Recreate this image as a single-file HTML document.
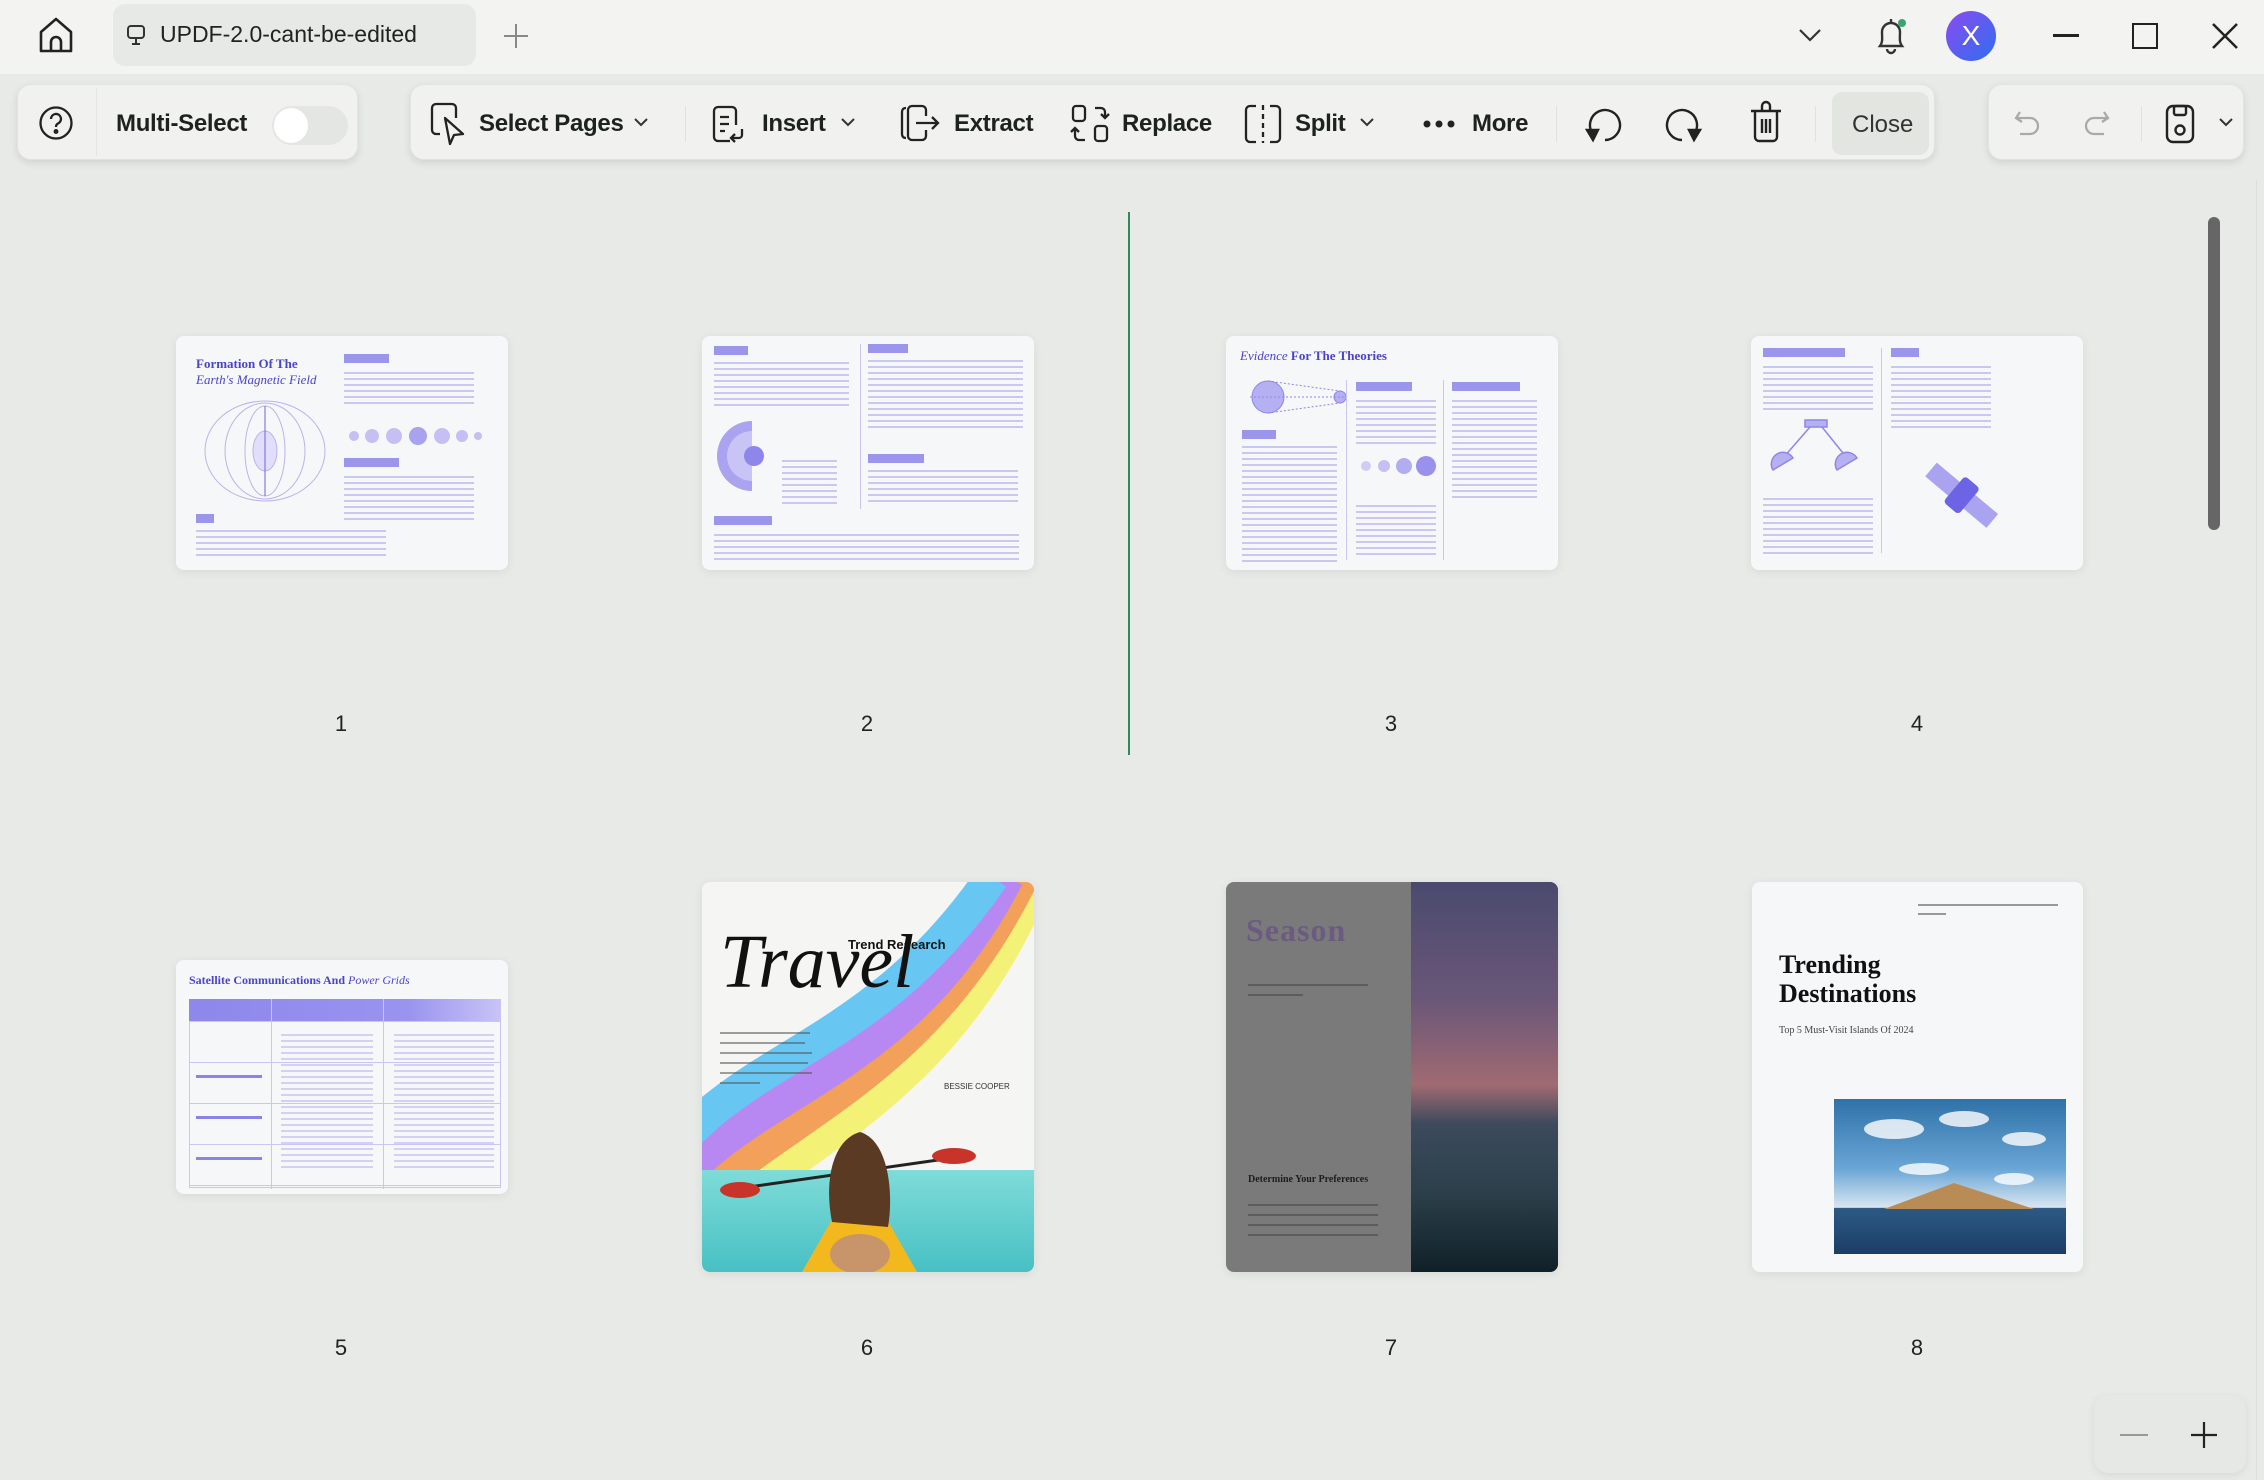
<!DOCTYPE html>
<html><head><meta charset="utf-8">
<style>
*{margin:0;padding:0;box-sizing:border-box}
body{width:2264px;height:1480px;overflow:hidden;background:#e8eae8;font-family:"Liberation Sans",sans-serif;position:relative;color:#1b1f1c}
.abs{position:absolute}
.title{left:0;top:0;width:2264px;height:74px;background:#f3f4f2}
.panel{position:absolute;background:#f1f2f0;border:1px solid #e2e4e1;border-radius:14px;box-shadow:0 3px 8px rgba(0,0,0,.10)}
.tb{position:absolute;top:124px;transform:translateY(-50%);font-size:24px;font-weight:bold;color:#1d221f;white-space:nowrap;letter-spacing:-0.3px}
svg.ic{position:absolute;overflow:visible}
.page{position:absolute;background:#f6f7f8;border-radius:8px;box-shadow:0 2px 10px rgba(0,0,0,.07);overflow:hidden}
.lbl{position:absolute;font-size:22px;color:#222;transform:translateX(-50%)}
.lines{position:absolute;background:repeating-linear-gradient(#f6f7f8 0 4px,#c9c8f0 4px 6px)}
.tag{position:absolute;height:9px;background:#9b95ec}
.ser{font-family:"Liberation Serif",serif}
</style></head><body>

<div class="abs title"></div>
<svg class="ic" style="left:38px;top:16px" width="36" height="38" viewBox="0 0 36 38" fill="none" stroke="#222" stroke-width="2.6" stroke-linejoin="round"><path d="M3 16 L18 3 L33 16 V35 H3 Z"/><path d="M13 35 V26 a5 5 0 0 1 10 0 V35"/></svg>
<div class="abs" style="left:113px;top:4px;width:363px;height:62px;background:#e7e9e6;border-radius:12px"></div>
<svg class="ic" style="left:126px;top:24px" width="20" height="22" viewBox="0 0 20 22" fill="none" stroke="#333" stroke-width="2"><rect x="2" y="2" width="16" height="12" rx="3"/><path d="M10 14v5M6 20h8"/></svg>
<div class="abs" style="left:160px;top:21px;font-size:23px;color:#222">UPDF-2.0-cant-be-edited</div>
<svg class="ic" style="left:503px;top:23px" width="26" height="26" stroke="#888" stroke-width="2"><path d="M13 1v24M1 13h24"/></svg>
<svg class="ic" style="left:1799px;top:28px" width="22" height="14" fill="none" stroke="#333" stroke-width="2.2"><path d="M1 2l10 10 10-10"/></svg>
<svg class="ic" style="left:1876px;top:16px" width="30" height="40" fill="none" stroke="#333" stroke-width="2.4"><path d="M4 30 C7 26 6 22 6 16 a9 9 0 0 1 18 0 c0 6 -1 10 2 14 Z M15 3v4 M11 33a4 4 0 0 0 8 0"/><circle cx="26" cy="7" r="4" fill="#3aa56a" stroke="none"/></svg>
<div class="abs" style="left:1946px;top:11px;width:50px;height:50px;border-radius:50%;background:linear-gradient(135deg,#8a4cf0,#2f6df0);color:#fff;font-size:28px;text-align:center;line-height:50px">X</div>
<div class="abs" style="left:2053px;top:34px;width:26px;height:2.5px;background:#222"></div>
<div class="abs" style="left:2132px;top:23px;width:26px;height:26px;border:2.5px solid #222"></div>
<svg class="ic" style="left:2212px;top:23px" width="26" height="26" stroke="#222" stroke-width="2.5"><path d="M1 1l24 24M25 1L1 25"/></svg>

<div class="panel" style="left:17px;top:84px;width:341px;height:76px"></div>
<div class="abs" style="left:96px;top:88px;width:1px;height:68px;background:#e4e6e3"></div>
<svg class="ic" style="left:39px;top:106px" width="34" height="34" fill="none" stroke="#222" stroke-width="2.3"><circle cx="17" cy="17" r="15.5"/><path d="M12 13a5 5 0 1 1 7 4.5c-1.5.8-2 1.8-2 3.5"/><circle cx="17" cy="25.5" r="1.3" fill="#222"/></svg>
<div class="tb" style="left:116px">Multi-Select</div>
<div class="abs" style="left:272px;top:106px;width:76px;height:39px;border-radius:20px;background:#e4e6e3"></div>
<div class="abs" style="left:274px;top:108px;width:34px;height:35px;border-radius:50%;background:#fff"></div>

<div class="panel" style="left:410px;top:84px;width:1525px;height:76px"></div>
<svg class="ic" style="left:430px;top:102px" width="36" height="44" fill="none" stroke="#222" stroke-width="2.3" stroke-linejoin="round"><path d="M10 32H6a4 4 0 0 1-4-4V6a4 4 0 0 1 4-4h16a4 4 0 0 1 4 4v10"/><path d="M15 16 L20 42 L24 33 L33 32 Z" fill="#f1f2f0"/></svg>
<div class="tb" style="left:479px">Select Pages</div>
<svg class="ic" style="left:634px;top:118px" width="14" height="9" fill="none" stroke="#333" stroke-width="2"><path d="M1 1l6 6 6-6"/></svg>
<div class="abs" style="left:685px;top:106px;width:1px;height:36px;background:#e0e2df"></div>
<svg class="ic" style="left:712px;top:105px" width="36" height="38" fill="none" stroke="#222" stroke-width="2.3"><path d="M18 36H6a4 4 0 0 1-4-4V6a4 4 0 0 1 4-4h14a4 4 0 0 1 4 4v14"/><path d="M8 12h9M8 19h9M8 26h5M30 24v6a3 3 0 0 1-3 3h-7M23 29l-4 4 4 4"/></svg>
<div class="tb" style="left:762px">Insert</div>
<svg class="ic" style="left:841px;top:118px" width="14" height="9" fill="none" stroke="#333" stroke-width="2"><path d="M1 1l6 6 6-6"/></svg>
<svg class="ic" style="left:900px;top:104px" width="48" height="38" fill="none" stroke="#222" stroke-width="2.3"><path d="M6 4C3 4 2 6 2 8v22c0 2 1 4 4 4"/><path d="M26 12V6a4 4 0 0 0-4-4H12a4 4 0 0 0-4 4v26a4 4 0 0 0 4 4h10a4 4 0 0 0 4-4v-6"/><path d="M16 19h22M32 13l6 6-6 6"/></svg>
<div class="tb" style="left:954px">Extract</div>
<svg class="ic" style="left:1071px;top:104px" width="38" height="40" fill="none" stroke="#222" stroke-width="2.3"><rect x="2" y="2" width="12" height="15" rx="3"/><rect x="24" y="22" width="12" height="15" rx="3"/><path d="M24 4h6a4 4 0 0 1 4 4v6M30 10l4 4 4-4"/><path d="M14 36H8a4 4 0 0 1-4-4v-6M0 28l4-4 4 4"/></svg>
<div class="tb" style="left:1122px">Replace</div>
<svg class="ic" style="left:1244px;top:104px" width="38" height="40" fill="none" stroke="#222" stroke-width="2.3"><path d="M12 2H6a4 4 0 0 0-4 4v28a4 4 0 0 0 4 4h6M26 2h6a4 4 0 0 1 4 4v28a4 4 0 0 1-4 4h-6"/><path d="M19 1v38" stroke-dasharray="5 4"/></svg>
<div class="tb" style="left:1295px">Split</div>
<svg class="ic" style="left:1360px;top:118px" width="14" height="9" fill="none" stroke="#333" stroke-width="2"><path d="M1 1l6 6 6-6"/></svg>
<svg class="ic" style="left:1423px;top:120px" width="34" height="8" fill="#222"><circle cx="4" cy="4" r="3.5"/><circle cx="16" cy="4" r="3.5"/><circle cx="28" cy="4" r="3.5"/></svg>
<div class="tb" style="left:1472px">More</div>
<div class="abs" style="left:1556px;top:106px;width:1px;height:36px;background:#e0e2df"></div>
<svg class="ic" style="left:1583px;top:104px" width="40" height="40" fill="none" stroke="#222" stroke-width="2.4"><path d="M10 30 A15 15 0 1 1 22 36"/><path d="M4 26 L10 36 L15 26 Z" fill="#222"/></svg>
<svg class="ic" style="left:1664px;top:104px" width="40" height="40" fill="none" stroke="#222" stroke-width="2.4"><path d="M30 30 A15 15 0 1 0 18 36"/><path d="M36 26 L30 36 L25 26 Z" fill="#222"/></svg>
<svg class="ic" style="left:1750px;top:100px" width="32" height="42" fill="none" stroke="#222" stroke-width="2.4"><path d="M1 11h30M12 11V6a4 4 0 0 1 8 0v5M5 11v26a4 4 0 0 0 4 4h14a4 4 0 0 0 4-4V11M12 19v14M16 19v14M20 19v14"/></svg>
<div class="abs" style="left:1815px;top:106px;width:1px;height:36px;background:#e0e2df"></div>
<div class="abs" style="left:1832px;top:92px;width:97px;height:63px;border-radius:10px;background:#e3e5e1"></div>
<div class="abs" style="left:1852px;top:111px;font-size:24px;color:#333">Close</div>

<div class="panel" style="left:1988px;top:84px;width:256px;height:76px"></div>
<svg class="ic" style="left:2014px;top:110px" width="26" height="28" fill="none" stroke="#aaa" stroke-width="2.3"><path d="M6 2L2 8l6 4M2 8h14a8 8 0 0 1 0 16H6"/></svg>
<svg class="ic" style="left:2084px;top:110px" width="26" height="28" fill="none" stroke="#aaa" stroke-width="2.3"><path d="M20 2l4 6-6 4M24 8H10a8 8 0 0 0 0 16h10"/></svg>
<div class="abs" style="left:2141px;top:106px;width:1px;height:36px;background:#e0e2df"></div>
<svg class="ic" style="left:2165px;top:104px" width="30" height="40" fill="none" stroke="#222" stroke-width="2.4"><rect x="2" y="2" width="26" height="36" rx="6"/><rect x="9" y="2" width="12" height="9" rx="2"/><circle cx="15" cy="26" r="4.5"/></svg>
<svg class="ic" style="left:2219px;top:118px" width="14" height="9" fill="none" stroke="#333" stroke-width="2"><path d="M1 1l6 6 6-6"/></svg>

<div class="abs" style="left:1128px;top:212px;width:2px;height:543px;background:#2e8b57"></div>
<div class="abs" style="left:2208px;top:217px;width:12px;height:313px;border-radius:6px;background:#666"></div>
<div class="abs" style="left:2256px;top:180px;width:1px;height:1300px;background:#ddd"></div>

<!-- Page 1 -->
<div class="page" style="left:176px;top:336px;width:332px;height:234px">
 <div class="abs ser" style="left:20px;top:20px;font-size:13px;color:#4a44c8;font-weight:bold;line-height:16px">Formation Of The<br><i style="font-weight:normal">Earth's Magnetic Field</i></div>
 <div class="tag" style="left:168px;top:18px;width:45px"></div>
 <div class="lines" style="left:168px;top:32px;width:130px;height:40px"></div>
 <svg class="abs" style="left:14px;top:60px" width="150" height="110" fill="none" stroke="#b8b4ee" stroke-width="1"><ellipse cx="75" cy="55" rx="20" ry="45"/><ellipse cx="75" cy="55" rx="40" ry="48"/><ellipse cx="75" cy="55" rx="60" ry="50"/><ellipse cx="75" cy="55" rx="12" ry="20" fill="#e0defa"/><path d="M75 10 L75 100" stroke="#6d66e0"/></svg>
 <svg class="abs" style="left:168px;top:80px" width="140" height="40"><g fill="#c4c0f3"><circle cx="10" cy="20" r="5"/><circle cx="28" cy="20" r="7"/><circle cx="50" cy="20" r="8"/><circle cx="74" cy="20" r="9" fill="#a8a2ef"/><circle cx="98" cy="20" r="8"/><circle cx="118" cy="20" r="6"/><circle cx="134" cy="20" r="4"/></g></svg>
 <div class="tag" style="left:168px;top:122px;width:55px"></div>
 <div class="lines" style="left:168px;top:136px;width:130px;height:48px"></div>
 <div class="tag" style="left:20px;top:178px;width:18px"></div>
 <div class="lines" style="left:20px;top:190px;width:190px;height:32px"></div>
</div>
<!-- Page 2 -->
<div class="page" style="left:702px;top:336px;width:332px;height:234px">
 <div class="tag" style="left:12px;top:10px;width:34px"></div>
 <div class="lines" style="left:12px;top:22px;width:135px;height:52px"></div>
 <svg class="abs" style="left:10px;top:80px" width="80" height="80"><path d="M40 5 A 35 35 0 1 0 40 75 Z" fill="#a9a3f0"/><path d="M40 15 A 25 25 0 1 0 40 65 Z" fill="#c8c4f6"/><circle cx="42" cy="40" r="10" fill="#8e86ea"/></svg>
 <div class="lines" style="left:80px;top:120px;width:55px;height:50px"></div>
 <div class="abs" style="left:158px;top:8px;width:1px;height:165px;background:#c9c6f2"></div>
 <div class="tag" style="left:166px;top:8px;width:40px"></div>
 <div class="lines" style="left:166px;top:20px;width:155px;height:74px"></div>
 <div class="tag" style="left:166px;top:118px;width:56px"></div>
 <div class="lines" style="left:166px;top:130px;width:150px;height:40px"></div>
 <div class="tag" style="left:12px;top:180px;width:58px"></div>
 <div class="lines" style="left:12px;top:194px;width:305px;height:30px"></div>
</div>
<!-- Page 3 -->
<div class="page" style="left:1226px;top:336px;width:332px;height:234px">
 <div class="abs ser" style="left:14px;top:12px;font-size:13px;color:#4a44c8;font-weight:bold"><i style="font-weight:normal">Evidence</i> For The Theories</div>
 <svg class="abs" style="left:14px;top:36px" width="110" height="50" fill="none" stroke="#8e86ea"><circle cx="28" cy="25" r="16" fill="#b5b0f2"/><circle cx="100" cy="25" r="6" fill="#b5b0f2"/><path d="M28 9 L100 19 M28 41 L100 31 M10 25h96" stroke-dasharray="2 2"/></svg>
 <div class="tag" style="left:16px;top:94px;width:34px"></div>
 <div class="lines" style="left:16px;top:106px;width:95px;height:120px"></div>
 <div class="abs" style="left:120px;top:44px;width:1px;height:180px;background:#c9c6f2"></div>
 <div class="tag" style="left:130px;top:46px;width:56px"></div>
 <div class="lines" style="left:130px;top:60px;width:80px;height:50px"></div>
 <svg class="abs" style="left:128px;top:115px" width="86" height="30"><circle cx="12" cy="15" r="5" fill="#d0ccf6"/><circle cx="30" cy="15" r="6" fill="#c4c0f3"/><circle cx="50" cy="15" r="8" fill="#b2acf1"/><circle cx="72" cy="15" r="10" fill="#9991ec"/></svg>
 <div class="lines" style="left:130px;top:165px;width:80px;height:56px"></div>
 <div class="abs" style="left:217px;top:44px;width:1px;height:180px;background:#c9c6f2"></div>
 <div class="tag" style="left:226px;top:46px;width:68px"></div>
 <div class="lines" style="left:226px;top:60px;width:85px;height:104px"></div>
</div>
<!-- Page 4 -->
<div class="page" style="left:1751px;top:336px;width:332px;height:234px">
 <div class="tag" style="left:12px;top:12px;width:82px"></div>
 <div class="lines" style="left:12px;top:26px;width:110px;height:50px"></div>
 <svg class="abs" style="left:14px;top:82px" width="100" height="70" fill="none" stroke="#8e86ea" stroke-width="1.5"><rect x="40" y="2" width="22" height="7" fill="#b5b0f2"/><path d="M45 9 L18 40 M57 9 L82 40"/><path d="M8 52 a10 10 0 0 1 20 -12 z M72 52 a10 10 0 0 1 20 -12 z" fill="#b5b0f2"/></svg>
 <div class="lines" style="left:12px;top:158px;width:110px;height:60px"></div>
 <div class="abs" style="left:130px;top:12px;width:1px;height:205px;background:#c9c6f2"></div>
 <div class="tag" style="left:140px;top:12px;width:28px"></div>
 <div class="lines" style="left:140px;top:26px;width:100px;height:70px"></div>
 <svg class="abs" style="left:165px;top:120px" width="90" height="80"><g transform="rotate(40 45 40)"><rect x="5" y="30" width="80" height="18" fill="#aaa4f0"/><rect x="35" y="22" width="20" height="34" rx="4" fill="#6c64e4"/></g></svg>
</div>
<!-- Page 5 -->
<div class="page" style="left:176px;top:960px;width:332px;height:234px">
 <div class="abs ser" style="left:13px;top:13px;font-size:12px;color:#4a44c8;font-weight:bold">Satellite Communications And <i style="font-weight:normal">Power Grids</i></div>
 <div class="abs" style="left:13px;top:39px;width:312px;height:22px;background:linear-gradient(90deg,#8e87ec,#9a93ef 70%,#c8c4f6)"></div>
 <div class="abs" style="left:13px;top:61px;width:312px;height:167px;border:1px solid #c9c6f2;background:repeating-linear-gradient(#f6f7f8 0 40px,#c9c6f2 40px 41px)"></div>
 <div class="abs" style="left:95px;top:39px;width:1px;height:190px;background:#c9c6f2"></div>
 <div class="abs" style="left:207px;top:39px;width:1px;height:190px;background:#c9c6f2"></div>
 <div class="lines" style="left:105px;top:70px;width:92px;height:140px;background:repeating-linear-gradient(transparent 0 4px,#d3d0f4 4px 6px)"></div>
 <div class="lines" style="left:218px;top:70px;width:100px;height:140px;background:repeating-linear-gradient(transparent 0 4px,#d3d0f4 4px 6px)"></div>
 <div class="lines" style="left:20px;top:77px;width:66px;height:130px;background:repeating-linear-gradient(transparent 0 38px,#8a84e6 38px 41px)"></div>
</div>
<!-- Page 6 -->
<div class="page" style="left:702px;top:882px;width:332px;height:390px;background:#f5f5f4">
 <svg class="abs" style="left:0;top:0" width="332" height="390" viewBox="0 0 332 390">
  <g fill="none" stroke-width="34">
   <path d="M-40 400 C 40 270, 230 250, 335 -5" stroke="#f3f277"/>
   <path d="M-40 360 C 40 240, 210 220, 320 -5" stroke="#f2a05a"/>
   <path d="M-40 320 C 40 205, 200 200, 305 -5" stroke="#b888f2"/>
   <path d="M-40 282 C 40 170, 170 170, 290 -5" stroke="#68c6f2"/>
  </g>
  <text x="18" y="105" font-family="Liberation Serif,serif" font-style="italic" font-size="76" fill="#111">Travel</text>
  <text x="146" y="67" font-family="Liberation Sans,sans-serif" font-weight="bold" font-size="13" fill="#111">Trend Research</text>
  <text x="242" y="207" font-family="Liberation Sans,sans-serif" font-size="8" fill="#333">BESSIE COOPER</text>
  <g fill="#555" opacity=".55"><rect x="18" y="150" width="90" height="2"/><rect x="18" y="160" width="85" height="2"/><rect x="18" y="170" width="92" height="2"/><rect x="18" y="180" width="88" height="2"/><rect x="18" y="190" width="92" height="2"/><rect x="18" y="200" width="40" height="2"/></g>
  <defs><linearGradient id="sea" x1="0" y1="0" x2="0" y2="1"><stop offset="0" stop-color="#7fdcd8"/><stop offset="1" stop-color="#48c0c4"/></linearGradient></defs>
  <rect x="0" y="288" width="332" height="102" fill="url(#sea)"/>
  <path d="M40 306 L250 276" stroke="#222" stroke-width="3"/>
  <ellipse cx="38" cy="308" rx="20" ry="8" fill="#c8342a"/>
  <ellipse cx="252" cy="274" rx="22" ry="8" fill="#c8342a"/>
  <path d="M100 390 L140 320 L175 320 L215 390 Z" fill="#f3b81e"/>
  <path d="M130 340 C 122 300 130 258 158 250 C 186 258 192 310 186 345 Z" fill="#5a3a22"/>
  <ellipse cx="158" cy="372" rx="30" ry="20" fill="#c8946a"/>
 </svg>
</div>
<!-- Page 7 -->
<div class="page" style="left:1226px;top:882px;width:332px;height:390px;background:#7a7a7a">
 <div class="abs" style="left:185px;top:0;width:147px;height:390px;background:linear-gradient(#4a4a6e 0%,#6a5778 30%,#a06a72 52%,#3d4a5c 62%,#2b3f4a 80%,#102028 100%)"></div>
 <div class="abs ser" style="left:20px;top:30px;font-size:32px;font-weight:bold;color:#6b5b80;letter-spacing:1px">Season</div>
 <div class="abs" style="left:22px;top:102px;width:120px;height:2px;background:#5c5c5c"></div>
 <div class="abs" style="left:22px;top:112px;width:55px;height:2px;background:#5c5c5c"></div>
 <div class="abs ser" style="left:22px;top:292px;font-size:10px;font-weight:bold;color:#1e1e1e">Determine Your Preferences</div>
 <div class="lines" style="left:22px;top:314px;width:130px;height:48px;background:repeating-linear-gradient(transparent 0 8px,#5c5c5c 8px 10px)"></div>
</div>
<!-- Page 8 -->
<div class="page" style="left:1752px;top:882px;width:331px;height:390px">
 <div class="abs" style="left:166px;top:22px;width:140px;height:2px;background:#999"></div>
 <div class="abs" style="left:166px;top:31px;width:28px;height:2px;background:#999"></div>
 <div class="abs ser" style="left:27px;top:68px;font-size:26px;font-weight:bold;color:#111;line-height:29px">Trending<br>Destinations</div>
 <div class="abs ser" style="left:27px;top:143px;font-size:10px;color:#444">Top 5 Must-Visit Islands Of 2024</div>
 <div class="abs" style="left:82px;top:217px;width:232px;height:155px;background:linear-gradient(#2f72a8 0%,#6aa6d6 45%,#d8e6f0 70%,#2c5a84 70.5%,#1c3e66 100%)"></div>
 <svg class="abs" style="left:82px;top:217px" width="232" height="155"><path d="M50 110 L120 84 L200 110 Z" fill="#b98c55"/><g fill="#fff" opacity=".8"><ellipse cx="60" cy="30" rx="30" ry="10"/><ellipse cx="130" cy="20" rx="25" ry="8"/><ellipse cx="190" cy="40" rx="22" ry="7"/><ellipse cx="90" cy="70" rx="25" ry="6"/><ellipse cx="180" cy="80" rx="20" ry="6"/></g></svg>
</div>

<div class="lbl" style="left:341px;top:711px">1</div>
<div class="lbl" style="left:867px;top:711px">2</div>
<div class="lbl" style="left:1391px;top:711px">3</div>
<div class="lbl" style="left:1917px;top:711px">4</div>
<div class="lbl" style="left:341px;top:1335px">5</div>
<div class="lbl" style="left:867px;top:1335px">6</div>
<div class="lbl" style="left:1391px;top:1335px">7</div>
<div class="lbl" style="left:1917px;top:1335px">8</div>

<div class="abs" style="left:2094px;top:1395px;width:152px;height:78px;background:#e6e8e5;border-radius:14px;box-shadow:0 2px 8px rgba(0,0,0,.08)"></div>
<div class="abs" style="left:2120px;top:1434px;width:28px;height:2px;background:#999"></div>
<svg class="ic" style="left:2191px;top:1422px" width="26" height="26" stroke="#222" stroke-width="2.2"><path d="M13 0v26M0 13h26"/></svg>
</body></html>
